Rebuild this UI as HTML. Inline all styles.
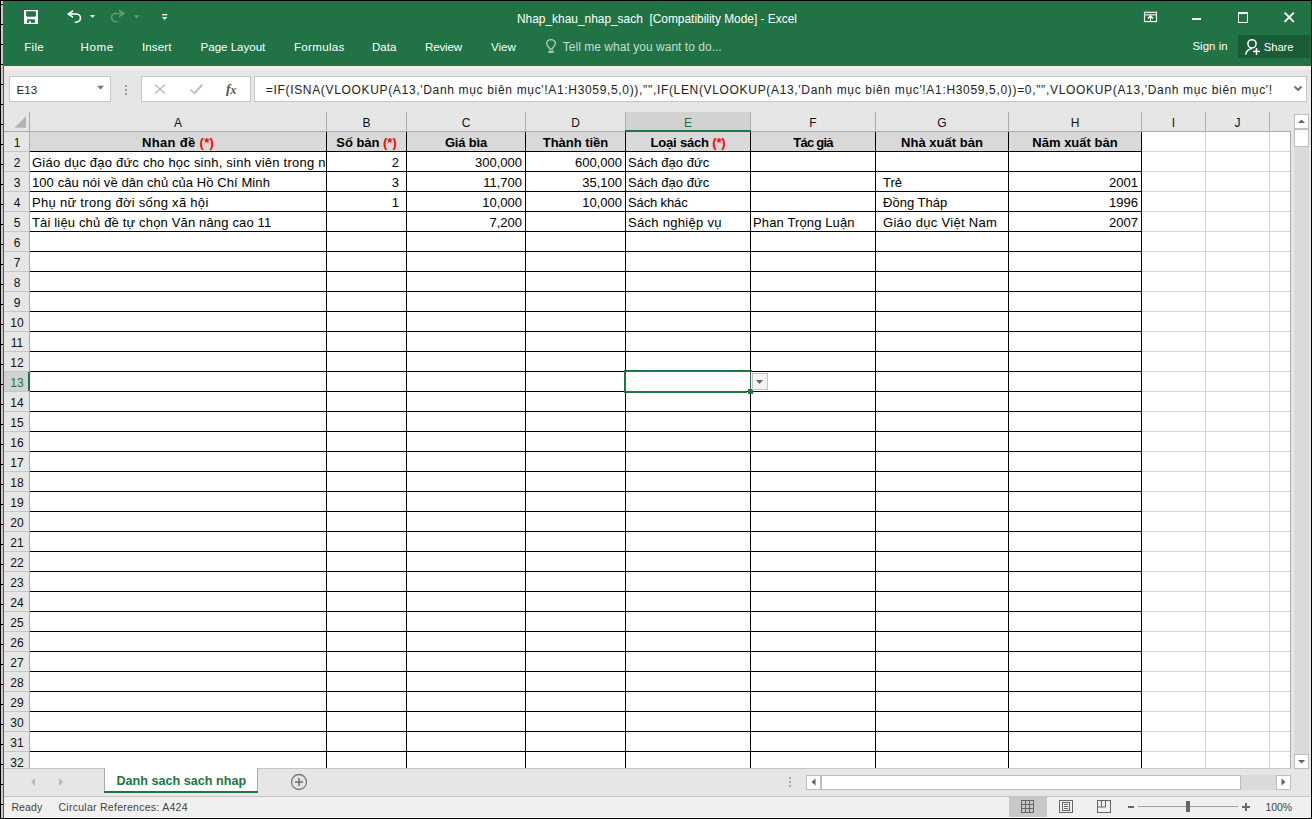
<!DOCTYPE html>
<html><head><meta charset="utf-8"><title>Nhap_khau_nhap_sach - Excel</title><style>
*{margin:0;padding:0;box-sizing:border-box}
html,body{width:1312px;height:819px;overflow:hidden;background:#000}
body{position:relative;font-family:"Liberation Sans", sans-serif;color:#000}
.a{position:absolute}
.t{position:absolute;white-space:pre;line-height:1}
</style></head>
<body>
<div class="a" style="left:1px;top:1px;width:2px;height:817px;background:#c9c9c9"></div><div class="a" style="left:1px;top:4px;width:2px;height:1px;background:#000"></div><div class="a" style="left:1px;top:24px;width:2px;height:1px;background:#000"></div><div class="a" style="left:1px;top:44px;width:2px;height:1px;background:#000"></div><div class="a" style="left:1px;top:64px;width:2px;height:1px;background:#000"></div><div class="a" style="left:1px;top:84px;width:2px;height:1px;background:#000"></div><div class="a" style="left:1px;top:104px;width:2px;height:1px;background:#000"></div><div class="a" style="left:1px;top:124px;width:2px;height:1px;background:#000"></div><div class="a" style="left:1px;top:144px;width:2px;height:1px;background:#000"></div><div class="a" style="left:1px;top:164px;width:2px;height:1px;background:#000"></div><div class="a" style="left:1px;top:184px;width:2px;height:1px;background:#000"></div><div class="a" style="left:1px;top:204px;width:2px;height:1px;background:#000"></div><div class="a" style="left:1px;top:224px;width:2px;height:1px;background:#000"></div><div class="a" style="left:1px;top:244px;width:2px;height:1px;background:#000"></div><div class="a" style="left:1px;top:264px;width:2px;height:1px;background:#000"></div><div class="a" style="left:1px;top:284px;width:2px;height:1px;background:#000"></div><div class="a" style="left:1px;top:304px;width:2px;height:1px;background:#000"></div><div class="a" style="left:1px;top:324px;width:2px;height:1px;background:#000"></div><div class="a" style="left:1px;top:344px;width:2px;height:1px;background:#000"></div><div class="a" style="left:1px;top:364px;width:2px;height:1px;background:#000"></div><div class="a" style="left:1px;top:384px;width:2px;height:1px;background:#000"></div><div class="a" style="left:1px;top:404px;width:2px;height:1px;background:#000"></div><div class="a" style="left:1px;top:424px;width:2px;height:1px;background:#000"></div><div class="a" style="left:1px;top:444px;width:2px;height:1px;background:#000"></div><div class="a" style="left:1px;top:464px;width:2px;height:1px;background:#000"></div><div class="a" style="left:1px;top:484px;width:2px;height:1px;background:#000"></div><div class="a" style="left:1px;top:504px;width:2px;height:1px;background:#000"></div><div class="a" style="left:1px;top:524px;width:2px;height:1px;background:#000"></div><div class="a" style="left:1px;top:544px;width:2px;height:1px;background:#000"></div><div class="a" style="left:1px;top:564px;width:2px;height:1px;background:#000"></div><div class="a" style="left:1px;top:584px;width:2px;height:1px;background:#000"></div><div class="a" style="left:1px;top:604px;width:2px;height:1px;background:#000"></div><div class="a" style="left:1px;top:624px;width:2px;height:1px;background:#000"></div><div class="a" style="left:1px;top:644px;width:2px;height:1px;background:#000"></div><div class="a" style="left:1px;top:664px;width:2px;height:1px;background:#000"></div><div class="a" style="left:1px;top:684px;width:2px;height:1px;background:#000"></div><div class="a" style="left:1px;top:704px;width:2px;height:1px;background:#000"></div><div class="a" style="left:1px;top:724px;width:2px;height:1px;background:#000"></div><div class="a" style="left:1px;top:744px;width:2px;height:1px;background:#000"></div><div class="a" style="left:1px;top:764px;width:2px;height:1px;background:#000"></div><div class="a" style="left:1px;top:784px;width:2px;height:1px;background:#000"></div><div class="a" style="left:1px;top:804px;width:2px;height:1px;background:#000"></div><div class="a" style="left:3px;top:1px;width:1308px;height:65px;background:#217346"></div><div class="a" style="left:3px;top:66px;width:1px;height:752px;background:#217346"></div><div class="a" style="left:4px;top:66px;width:1307px;height:4px;background:#efefef"></div><div class="a" style="left:4px;top:70px;width:1307px;height:42px;background:#e6e6e6"></div><div class="a" style="left:9px;top:76px;width:102px;height:26px;background:#fff;border:1px solid #c6c6c6"></div><div class="a" style="left:141px;top:76px;width:110px;height:26px;background:#fff;border:1px solid #c6c6c6"></div><div class="a" style="left:254px;top:76px;width:1053px;height:26px;background:#fff;border:1px solid #c6c6c6"></div><div class="a" style="left:125px;top:85px;width:2px;height:2px;background:#9a9a9a"></div><div class="a" style="left:125px;top:89px;width:2px;height:2px;background:#9a9a9a"></div><div class="a" style="left:125px;top:93px;width:2px;height:2px;background:#9a9a9a"></div><div class="a" style="left:4px;top:112px;width:1287px;height:20px;background:#e6e6e6"></div><div class="a" style="left:4px;top:132px;width:25px;height:636px;background:#e6e6e6"></div><div class="a" style="left:30px;top:132px;width:1260px;height:636px;background:#fff"></div><div class="a" style="left:30px;top:132px;width:1111px;height:19px;background:#d9d9d9"></div><div class="a" style="left:626px;top:112px;width:124px;height:18px;background:#d2d2d2"></div><div class="a" style="left:326px;top:112px;width:1px;height:19px;background:#ababab"></div><div class="a" style="left:406px;top:112px;width:1px;height:19px;background:#ababab"></div><div class="a" style="left:525px;top:112px;width:1px;height:19px;background:#ababab"></div><div class="a" style="left:625px;top:112px;width:1px;height:19px;background:#ababab"></div><div class="a" style="left:750px;top:112px;width:1px;height:19px;background:#ababab"></div><div class="a" style="left:875px;top:112px;width:1px;height:19px;background:#ababab"></div><div class="a" style="left:1008px;top:112px;width:1px;height:19px;background:#ababab"></div><div class="a" style="left:1141px;top:112px;width:1px;height:19px;background:#ababab"></div><div class="a" style="left:1205px;top:112px;width:1px;height:19px;background:#ababab"></div><div class="a" style="left:1269px;top:112px;width:1px;height:19px;background:#ababab"></div><div class="a" style="left:29px;top:112px;width:1px;height:656px;background:#ababab"></div><div class="a" style="left:4px;top:131px;width:1286px;height:1px;background:#ababab"></div><div class="a" style="left:625px;top:130px;width:126px;height:2px;background:#217346"></div><div class="a" style="left:1205px;top:132px;width:1px;height:636px;background:#d4d4d4"></div><div class="a" style="left:1269px;top:132px;width:1px;height:636px;background:#d4d4d4"></div><div class="a" style="left:1142px;top:151px;width:148px;height:1px;background:#d4d4d4"></div><div class="a" style="left:4px;top:151px;width:25px;height:1px;background:#c6c6c6"></div><div class="a" style="left:1142px;top:171px;width:148px;height:1px;background:#d4d4d4"></div><div class="a" style="left:4px;top:171px;width:25px;height:1px;background:#c6c6c6"></div><div class="a" style="left:1142px;top:191px;width:148px;height:1px;background:#d4d4d4"></div><div class="a" style="left:4px;top:191px;width:25px;height:1px;background:#c6c6c6"></div><div class="a" style="left:1142px;top:211px;width:148px;height:1px;background:#d4d4d4"></div><div class="a" style="left:4px;top:211px;width:25px;height:1px;background:#c6c6c6"></div><div class="a" style="left:1142px;top:231px;width:148px;height:1px;background:#d4d4d4"></div><div class="a" style="left:4px;top:231px;width:25px;height:1px;background:#c6c6c6"></div><div class="a" style="left:1142px;top:251px;width:148px;height:1px;background:#d4d4d4"></div><div class="a" style="left:4px;top:251px;width:25px;height:1px;background:#c6c6c6"></div><div class="a" style="left:1142px;top:271px;width:148px;height:1px;background:#d4d4d4"></div><div class="a" style="left:4px;top:271px;width:25px;height:1px;background:#c6c6c6"></div><div class="a" style="left:1142px;top:291px;width:148px;height:1px;background:#d4d4d4"></div><div class="a" style="left:4px;top:291px;width:25px;height:1px;background:#c6c6c6"></div><div class="a" style="left:1142px;top:311px;width:148px;height:1px;background:#d4d4d4"></div><div class="a" style="left:4px;top:311px;width:25px;height:1px;background:#c6c6c6"></div><div class="a" style="left:1142px;top:331px;width:148px;height:1px;background:#d4d4d4"></div><div class="a" style="left:4px;top:331px;width:25px;height:1px;background:#c6c6c6"></div><div class="a" style="left:1142px;top:351px;width:148px;height:1px;background:#d4d4d4"></div><div class="a" style="left:4px;top:351px;width:25px;height:1px;background:#c6c6c6"></div><div class="a" style="left:1142px;top:371px;width:148px;height:1px;background:#d4d4d4"></div><div class="a" style="left:4px;top:371px;width:25px;height:1px;background:#c6c6c6"></div><div class="a" style="left:1142px;top:391px;width:148px;height:1px;background:#d4d4d4"></div><div class="a" style="left:4px;top:391px;width:25px;height:1px;background:#c6c6c6"></div><div class="a" style="left:1142px;top:411px;width:148px;height:1px;background:#d4d4d4"></div><div class="a" style="left:4px;top:411px;width:25px;height:1px;background:#c6c6c6"></div><div class="a" style="left:1142px;top:431px;width:148px;height:1px;background:#d4d4d4"></div><div class="a" style="left:4px;top:431px;width:25px;height:1px;background:#c6c6c6"></div><div class="a" style="left:1142px;top:451px;width:148px;height:1px;background:#d4d4d4"></div><div class="a" style="left:4px;top:451px;width:25px;height:1px;background:#c6c6c6"></div><div class="a" style="left:1142px;top:471px;width:148px;height:1px;background:#d4d4d4"></div><div class="a" style="left:4px;top:471px;width:25px;height:1px;background:#c6c6c6"></div><div class="a" style="left:1142px;top:491px;width:148px;height:1px;background:#d4d4d4"></div><div class="a" style="left:4px;top:491px;width:25px;height:1px;background:#c6c6c6"></div><div class="a" style="left:1142px;top:511px;width:148px;height:1px;background:#d4d4d4"></div><div class="a" style="left:4px;top:511px;width:25px;height:1px;background:#c6c6c6"></div><div class="a" style="left:1142px;top:531px;width:148px;height:1px;background:#d4d4d4"></div><div class="a" style="left:4px;top:531px;width:25px;height:1px;background:#c6c6c6"></div><div class="a" style="left:1142px;top:551px;width:148px;height:1px;background:#d4d4d4"></div><div class="a" style="left:4px;top:551px;width:25px;height:1px;background:#c6c6c6"></div><div class="a" style="left:1142px;top:571px;width:148px;height:1px;background:#d4d4d4"></div><div class="a" style="left:4px;top:571px;width:25px;height:1px;background:#c6c6c6"></div><div class="a" style="left:1142px;top:591px;width:148px;height:1px;background:#d4d4d4"></div><div class="a" style="left:4px;top:591px;width:25px;height:1px;background:#c6c6c6"></div><div class="a" style="left:1142px;top:611px;width:148px;height:1px;background:#d4d4d4"></div><div class="a" style="left:4px;top:611px;width:25px;height:1px;background:#c6c6c6"></div><div class="a" style="left:1142px;top:631px;width:148px;height:1px;background:#d4d4d4"></div><div class="a" style="left:4px;top:631px;width:25px;height:1px;background:#c6c6c6"></div><div class="a" style="left:1142px;top:651px;width:148px;height:1px;background:#d4d4d4"></div><div class="a" style="left:4px;top:651px;width:25px;height:1px;background:#c6c6c6"></div><div class="a" style="left:1142px;top:671px;width:148px;height:1px;background:#d4d4d4"></div><div class="a" style="left:4px;top:671px;width:25px;height:1px;background:#c6c6c6"></div><div class="a" style="left:1142px;top:691px;width:148px;height:1px;background:#d4d4d4"></div><div class="a" style="left:4px;top:691px;width:25px;height:1px;background:#c6c6c6"></div><div class="a" style="left:1142px;top:711px;width:148px;height:1px;background:#d4d4d4"></div><div class="a" style="left:4px;top:711px;width:25px;height:1px;background:#c6c6c6"></div><div class="a" style="left:1142px;top:731px;width:148px;height:1px;background:#d4d4d4"></div><div class="a" style="left:4px;top:731px;width:25px;height:1px;background:#c6c6c6"></div><div class="a" style="left:1142px;top:751px;width:148px;height:1px;background:#d4d4d4"></div><div class="a" style="left:4px;top:751px;width:25px;height:1px;background:#c6c6c6"></div><div class="a" style="left:326px;top:132px;width:1px;height:636px;background:#000"></div><div class="a" style="left:406px;top:132px;width:1px;height:636px;background:#000"></div><div class="a" style="left:525px;top:132px;width:1px;height:636px;background:#000"></div><div class="a" style="left:625px;top:132px;width:1px;height:636px;background:#000"></div><div class="a" style="left:750px;top:132px;width:1px;height:636px;background:#000"></div><div class="a" style="left:875px;top:132px;width:1px;height:636px;background:#000"></div><div class="a" style="left:1008px;top:132px;width:1px;height:636px;background:#000"></div><div class="a" style="left:1141px;top:132px;width:1px;height:636px;background:#000"></div><div class="a" style="left:30px;top:151px;width:1112px;height:1px;background:#000"></div><div class="a" style="left:30px;top:171px;width:1112px;height:1px;background:#000"></div><div class="a" style="left:30px;top:191px;width:1112px;height:1px;background:#000"></div><div class="a" style="left:30px;top:211px;width:1112px;height:1px;background:#000"></div><div class="a" style="left:30px;top:231px;width:1112px;height:1px;background:#000"></div><div class="a" style="left:30px;top:251px;width:1112px;height:1px;background:#000"></div><div class="a" style="left:30px;top:271px;width:1112px;height:1px;background:#000"></div><div class="a" style="left:30px;top:291px;width:1112px;height:1px;background:#000"></div><div class="a" style="left:30px;top:311px;width:1112px;height:1px;background:#000"></div><div class="a" style="left:30px;top:331px;width:1112px;height:1px;background:#000"></div><div class="a" style="left:30px;top:351px;width:1112px;height:1px;background:#000"></div><div class="a" style="left:30px;top:371px;width:1112px;height:1px;background:#000"></div><div class="a" style="left:30px;top:391px;width:1112px;height:1px;background:#000"></div><div class="a" style="left:30px;top:411px;width:1112px;height:1px;background:#000"></div><div class="a" style="left:30px;top:431px;width:1112px;height:1px;background:#000"></div><div class="a" style="left:30px;top:451px;width:1112px;height:1px;background:#000"></div><div class="a" style="left:30px;top:471px;width:1112px;height:1px;background:#000"></div><div class="a" style="left:30px;top:491px;width:1112px;height:1px;background:#000"></div><div class="a" style="left:30px;top:511px;width:1112px;height:1px;background:#000"></div><div class="a" style="left:30px;top:531px;width:1112px;height:1px;background:#000"></div><div class="a" style="left:30px;top:551px;width:1112px;height:1px;background:#000"></div><div class="a" style="left:30px;top:571px;width:1112px;height:1px;background:#000"></div><div class="a" style="left:30px;top:591px;width:1112px;height:1px;background:#000"></div><div class="a" style="left:30px;top:611px;width:1112px;height:1px;background:#000"></div><div class="a" style="left:30px;top:631px;width:1112px;height:1px;background:#000"></div><div class="a" style="left:30px;top:651px;width:1112px;height:1px;background:#000"></div><div class="a" style="left:30px;top:671px;width:1112px;height:1px;background:#000"></div><div class="a" style="left:30px;top:691px;width:1112px;height:1px;background:#000"></div><div class="a" style="left:30px;top:711px;width:1112px;height:1px;background:#000"></div><div class="a" style="left:30px;top:731px;width:1112px;height:1px;background:#000"></div><div class="a" style="left:30px;top:751px;width:1112px;height:1px;background:#000"></div><div class="a" style="left:1290px;top:131px;width:1px;height:638px;background:#ababab"></div><div class="a" style="left:4px;top:768px;width:1307px;height:1px;background:#c6c6c6"></div><svg class="a" style="left:4px;top:112px;" width="25" height="19" viewBox="0 0 25 19"><polygon points="10.5,15.7 22,15.7 22,4.2" fill="#b4b4b4"/></svg><div class="a" style="left:4px;top:372px;width:24px;height:19px;background:#d2d2d2"></div><div class="a" style="left:28px;top:372px;width:2px;height:19px;background:#217346"></div><div class="a" style="left:624px;top:370px;width:128px;height:2px;background:#217346"></div><div class="a" style="left:624px;top:370px;width:2px;height:23px;background:#217346"></div><div class="a" style="left:750px;top:370px;width:1px;height:19px;background:#217346"></div><div class="a" style="left:624px;top:391px;width:123px;height:2px;background:#217346"></div><div class="a" style="left:748px;top:389px;width:5px;height:5px;background:#217346"></div><div class="a" style="left:752px;top:373px;width:16px;height:17px;background:#f4f4f6;border:1px solid #c2c2c4"></div><svg class="a" style="left:752px;top:373px;" width="16" height="17" viewBox="0 0 16 17"><polygon points="4,7 11,7 7.5,11" fill="#666"/></svg><div class="a" style="left:1291px;top:112px;width:20px;height:657px;background:#e6e6e6"></div><div class="a" style="left:1294px;top:147px;width:15px;height:607px;background:#dadada"></div><div class="a" style="left:1294px;top:114px;width:15px;height:15px;background:#fff;border:1px solid #bdbdbd"></div><svg class="a" style="left:1294px;top:114px;" width="15" height="15" viewBox="0 0 15 15"><polygon points="4,9 11,9 7.5,5.5" fill="#606060"/></svg><div class="a" style="left:1294px;top:129px;width:15px;height:18px;background:#fff;border:1px solid #bdbdbd"></div><div class="a" style="left:1294px;top:754px;width:15px;height:15px;background:#fff;border:1px solid #bdbdbd"></div><svg class="a" style="left:1294px;top:754px;" width="15" height="15" viewBox="0 0 15 15"><polygon points="4,6 11,6 7.5,9.5" fill="#606060"/></svg><div class="a" style="left:4px;top:769px;width:1307px;height:27px;background:#e6e6e6"></div><div class="a" style="left:4px;top:796px;width:1307px;height:1px;background:#c6c6c6"></div><div class="a" style="left:104px;top:768px;width:154px;height:23px;background:#fff;border-left:1px solid #ababab;border-right:1px solid #ababab"></div><div class="a" style="left:104px;top:791px;width:154px;height:2px;background:#217346"></div><svg class="a" style="left:29px;top:775px;" width="8" height="14" viewBox="0 0 8 14"><polygon points="6,3 6,11 2,7" fill="#b9b9b9"/></svg><svg class="a" style="left:57px;top:775px;" width="8" height="14" viewBox="0 0 8 14"><polygon points="2,3 2,11 6,7" fill="#b9b9b9"/></svg><svg class="a" style="left:289px;top:772px;" width="20" height="20" viewBox="0 0 20 20"><circle cx="10" cy="10" r="7.5" fill="none" stroke="#7a7a7a" stroke-width="1.3"/><rect x="6" y="9.2" width="8" height="1.7" fill="#7a7a7a"/><rect x="9.15" y="6" width="1.7" height="8" fill="#7a7a7a"/></svg><div class="a" style="left:789px;top:777px;width:2px;height:2px;background:#a8a8a8"></div><div class="a" style="left:789px;top:781px;width:2px;height:2px;background:#a8a8a8"></div><div class="a" style="left:789px;top:785px;width:2px;height:2px;background:#a8a8a8"></div><div class="a" style="left:806px;top:775px;width:485px;height:15px;background:#dadada"></div><div class="a" style="left:806px;top:775px;width:15px;height:15px;background:#fff;border:1px solid #bdbdbd"></div><svg class="a" style="left:806px;top:775px;" width="15" height="15" viewBox="0 0 15 15"><polygon points="9.5,3.5 9.5,10.5 5.5,7" fill="#606060"/></svg><div class="a" style="left:821px;top:775px;width:420px;height:15px;background:#fff;border:1px solid #bdbdbd"></div><div class="a" style="left:1276px;top:775px;width:15px;height:15px;background:#fff;border:1px solid #bdbdbd"></div><svg class="a" style="left:1276px;top:775px;" width="15" height="15" viewBox="0 0 15 15"><polygon points="5.5,3.5 5.5,10.5 9.5,7" fill="#606060"/></svg><div class="a" style="left:4px;top:797px;width:1307px;height:21px;background:#f0f0f0"></div><div class="a" style="left:4px;top:817px;width:1307px;height:1px;background:#fafafa"></div><div class="a" style="left:1009px;top:797px;width:38px;height:20px;background:#c8c8c8"></div><svg class="a" style="left:1021px;top:800px;" width="14" height="14" viewBox="0 0 14 14"><g fill="none" stroke="#666" stroke-width="1"><rect x="0.5" y="0.5" width="12" height="12"/><line x1="4.5" y1="0" x2="4.5" y2="13"/><line x1="8.5" y1="0" x2="8.5" y2="13"/><line x1="0" y1="4.5" x2="13" y2="4.5"/><line x1="0" y1="8.5" x2="13" y2="8.5"/></g></svg><svg class="a" style="left:1059px;top:800px;" width="15" height="14" viewBox="0 0 15 14"><g fill="none" stroke="#666" stroke-width="1"><rect x="0.5" y="0.5" width="13" height="12"/><rect x="3.5" y="2.5" width="7" height="8"/><line x1="5" y1="4.5" x2="9" y2="4.5"/><line x1="5" y1="6.5" x2="9" y2="6.5"/><line x1="5" y1="8.5" x2="9" y2="8.5"/></g></svg><svg class="a" style="left:1097px;top:800px;" width="15" height="14" viewBox="0 0 15 14"><g fill="none" stroke="#666" stroke-width="1"><rect x="0.5" y="0.5" width="13" height="12"/><polyline points="0.5,7 8.5,7 8.5,0.5"/><line x1="4.5" y1="0.5" x2="4.5" y2="7"/></g></svg><div class="a" style="left:1128px;top:806px;width:6px;height:2px;background:#666"></div><div class="a" style="left:1138px;top:806px;width:100px;height:1px;background:#a0a0a0"></div><div class="a" style="left:1186px;top:801px;width:4px;height:11px;background:#666"></div><div class="a" style="left:1242px;top:806px;width:8px;height:2px;background:#666"></div><div class="a" style="left:1245px;top:803px;width:2px;height:8px;background:#666"></div><svg class="a" style="left:24px;top:10px;" width="14" height="14" viewBox="0 0 14 14"><rect x="0" y="0" width="14" height="14" fill="#ffffff"/><path d="M2.1,1.2 H11.9 V5.8 L11,6.7 H3 L2.1,5.8 Z" fill="#217346"/><rect x="3.1" y="9.3" width="7.8" height="3.6" fill="#217346"/><rect x="5" y="11.3" width="2" height="1.7" fill="#ffffff"/></svg><svg class="a" style="left:64px;top:8px;" width="20" height="18" viewBox="0 0 20 18"><path d="M5,6 H12 A4.5,4.1 0 0 1 12,14.2 H11.4" fill="none" stroke="#ffffff" stroke-width="1.6" stroke-linecap="round"/><polygon points="2.8,6 8.8,2 9.3,3.5 6,6 9.3,8.5 8.8,10" fill="#ffffff"/></svg><svg class="a" style="left:88px;top:13px;" width="9" height="7" viewBox="0 0 9 7"><polygon points="1.8,2 7.2,2 4.5,4.8" fill="#ffffff"/></svg><svg class="a" style="left:108px;top:8px;" width="20" height="18" viewBox="0 0 20 18"><path d="M15,5.5 H8 A4.5,4.1 0 0 0 8,13.7 H8.6" fill="none" stroke="#5e9f78" stroke-width="1.6" stroke-linecap="round"/><polygon points="17.2,5.5 11.2,1.5 10.7,3 14,5.5 10.7,8 11.2,9.5" fill="#5e9f78"/></svg><svg class="a" style="left:131px;top:13px;" width="11" height="7" viewBox="0 0 11 7"><polygon points="2.6,2.2 8.6,2.2 5.6,5.3" fill="#5e9f78"/></svg><svg class="a" style="left:160px;top:12px;" width="9" height="10" viewBox="0 0 9 10"><rect x="2" y="2" width="5.3" height="1.3" fill="#ffffff"/><polygon points="2,5 7.3,5 4.65,8" fill="#ffffff"/></svg><svg class="a" style="left:1143px;top:11px;" width="16" height="13" viewBox="0 0 16 13"><g fill="none" stroke="#ffffff" stroke-width="1.1"><rect x="1.5" y="1.3" width="12" height="9.3"/><line x1="1.5" y1="3.8" x2="13.5" y2="3.8"/><line x1="7.5" y1="4.5" x2="7.5" y2="10.5"/><polyline points="5,7.5 7.5,5 10,7.5" stroke-width="1.4"/></g></svg><div class="a" style="left:1192px;top:18px;width:9px;height:2px;background:#fff"></div><svg class="a" style="left:1237px;top:11px;" width="13" height="13" viewBox="0 0 13 13"><g fill="none" stroke="#ffffff" stroke-width="1"><rect x="1.5" y="1.5" width="9" height="10"/><line x1="1" y1="2.5" x2="11" y2="2.5"/></g></svg><svg class="a" style="left:1282px;top:10px;" width="14" height="14" viewBox="0 0 14 14"><g stroke="#ffffff" stroke-width="1.9"><line x1="2.6" y1="2.6" x2="11.8" y2="11.8"/><line x1="11.8" y1="2.6" x2="2.6" y2="11.8"/></g></svg><svg class="a" style="left:543px;top:36px;" width="16" height="20" viewBox="0 0 16 20"><path d="M6.6,13 C6.3,10.8 3.6,9.6 3.6,7.6 A4.4,4 0 1 1 12.4,7.6 C12.4,9.6 9.7,10.8 9.4,13 Z" fill="none" stroke="#a9d0b5" stroke-width="1.3"/><rect x="5.4" y="14.7" width="5.4" height="2.2" fill="#a9d0b5"/></svg><div class="a" style="left:1238px;top:35px;width:72px;height:23px;background:#1a5c35"></div><svg class="a" style="left:1242px;top:37px;" width="22" height="20" viewBox="0 0 22 20"><g fill="none" stroke="#ffffff" stroke-width="1.5"><circle cx="10" cy="6.8" r="4.1"/><path d="M3.6,17.5 C4.5,13.5 7,11.8 10,11.4"/><line x1="11" y1="14.4" x2="18" y2="14.4"/><line x1="14.5" y1="11" x2="14.5" y2="18"/></g></svg><svg class="a" style="left:150px;top:80px;" width="20" height="18" viewBox="0 0 20 18"><g stroke="#b8b8b8" stroke-width="1.3"><line x1="5" y1="4.5" x2="15" y2="13.5"/><line x1="15" y1="4.5" x2="5" y2="13.5"/></g></svg><svg class="a" style="left:186px;top:80px;" width="20" height="18" viewBox="0 0 20 18"><polyline points="4.5,9.8 8.6,13.2 16.3,4.5" fill="none" stroke="#c2c2c2" stroke-width="2"/></svg><div class="t" style="left:226px;top:82.3px;font-family:'Liberation Serif',serif;font-style:italic;font-weight:bold;font-size:13.5px;color:#555">f</div><div class="t" style="left:230.5px;top:84.5px;font-family:'Liberation Serif',serif;font-style:italic;font-weight:bold;font-size:11.5px;color:#555">x</div><svg class="a" style="left:95px;top:84px;" width="11" height="8" viewBox="0 0 11 8"><polygon points="2,1.8 9,1.8 5.5,5.8" fill="#7a7a7a"/></svg><svg class="a" style="left:1292px;top:84px;" width="12" height="10" viewBox="0 0 12 10"><polyline points="2.5,2.5 6,6 9.5,2.5" fill="none" stroke="#6a6a6a" stroke-width="1.8"/></svg><div id="t1" class="t" style="left:517px;top:14.43px;font-size:11.9px;letter-spacing:0.008px;color:#fff">Nhap_khau_nhap_sach  [Compatibility Mode] - Excel</div><div id="t2" class="t" style="left:24.2px;top:41.18px;font-size:11.6px;letter-spacing:0.267px;color:#fff">File</div><div id="t3" class="t" style="left:80.6px;top:41.18px;font-size:11.6px;letter-spacing:0.533px;color:#fff">Home</div><div id="t4" class="t" style="left:142px;top:41.18px;font-size:11.6px;letter-spacing:0.080px;color:#fff">Insert</div><div id="t5" class="t" style="left:200.6px;top:41.18px;font-size:11.6px;letter-spacing:-0.040px;color:#fff">Page Layout</div><div id="t6" class="t" style="left:294px;top:41.18px;font-size:11.6px;letter-spacing:0.286px;color:#fff">Formulas</div><div id="t7" class="t" style="left:372px;top:41.18px;font-size:11.6px;color:#fff">Data</div><div id="t8" class="t" style="left:425px;top:41.18px;font-size:11.6px;letter-spacing:-0.200px;color:#fff">Review</div><div id="t9" class="t" style="left:491px;top:41.18px;font-size:11.6px;color:#fff">View</div><div id="t10" class="t" style="left:562.8px;top:40.84px;font-size:12px;letter-spacing:0.028px;color:#c7dccd">Tell me what you want to do...</div><div id="t11" class="t" style="left:1192.4px;top:41.35px;font-size:11.4px;letter-spacing:0.067px;color:#fff">Sign in</div><div id="t12" class="t" style="left:1263.8px;top:41.52px;font-size:11.2px;letter-spacing:-0.050px;color:#fff">Share</div><div id="t13" class="t" style="left:16.4px;top:84.77px;font-size:11.5px;letter-spacing:0.100px;color:#222">E13</div><div id="t14" class="t" style="left:265.8px;top:83.64px;font-size:12px;letter-spacing:0.670px;color:#222">=IF(ISNA(VLOOKUP(A13,&#x27;Danh mục biên mục&#x27;!A1:H3059,5,0)),&quot;&quot;,IF(LEN(VLOOKUP(A13,&#x27;Danh mục biên mục&#x27;!A1:H3059,5,0))=0,&quot;&quot;,VLOOKUP(A13,&#x27;Danh mục biên mục&#x27;!</div><div id="t15" class="t" style="left:30px;width:296px;text-align:center;top:116.64px;font-size:12px;color:#111">A</div><div id="t16" class="t" style="left:327px;width:79px;text-align:center;top:116.64px;font-size:12px;color:#111">B</div><div id="t17" class="t" style="left:407px;width:118px;text-align:center;top:116.64px;font-size:12px;color:#111">C</div><div id="t18" class="t" style="left:526px;width:99px;text-align:center;top:116.64px;font-size:12px;color:#111">D</div><div id="t19" class="t" style="left:626px;width:124px;text-align:center;top:116.64px;font-size:12px;color:#217346">E</div><div id="t20" class="t" style="left:751px;width:124px;text-align:center;top:116.64px;font-size:12px;color:#111">F</div><div id="t21" class="t" style="left:876px;width:132px;text-align:center;top:116.64px;font-size:12px;color:#111">G</div><div id="t22" class="t" style="left:1009px;width:132px;text-align:center;top:116.64px;font-size:12px;color:#111">H</div><div id="t23" class="t" style="left:1142px;width:63px;text-align:center;top:116.64px;font-size:12px;color:#111">I</div><div id="t24" class="t" style="left:1206px;width:63px;text-align:center;top:116.64px;font-size:12px;color:#111">J</div><div id="t25" class="t" style="left:5px;width:24px;text-align:center;top:136.54px;font-size:12px;color:#111">1</div><div id="t26" class="t" style="left:5px;width:24px;text-align:center;top:156.54px;font-size:12px;color:#111">2</div><div id="t27" class="t" style="left:5px;width:24px;text-align:center;top:176.54px;font-size:12px;color:#111">3</div><div id="t28" class="t" style="left:5px;width:24px;text-align:center;top:196.54px;font-size:12px;color:#111">4</div><div id="t29" class="t" style="left:5px;width:24px;text-align:center;top:216.54px;font-size:12px;color:#111">5</div><div id="t30" class="t" style="left:5px;width:24px;text-align:center;top:236.54px;font-size:12px;color:#111">6</div><div id="t31" class="t" style="left:5px;width:24px;text-align:center;top:256.54px;font-size:12px;color:#111">7</div><div id="t32" class="t" style="left:5px;width:24px;text-align:center;top:276.54px;font-size:12px;color:#111">8</div><div id="t33" class="t" style="left:5px;width:24px;text-align:center;top:296.54px;font-size:12px;color:#111">9</div><div id="t34" class="t" style="left:5px;width:24px;text-align:center;top:316.54px;font-size:12px;color:#111">10</div><div id="t35" class="t" style="left:5px;width:24px;text-align:center;top:336.54px;font-size:12px;color:#111">11</div><div id="t36" class="t" style="left:5px;width:24px;text-align:center;top:356.54px;font-size:12px;color:#111">12</div><div id="t37" class="t" style="left:5px;width:24px;text-align:center;top:376.54px;font-size:12px;color:#217346">13</div><div id="t38" class="t" style="left:5px;width:24px;text-align:center;top:396.54px;font-size:12px;color:#111">14</div><div id="t39" class="t" style="left:5px;width:24px;text-align:center;top:416.54px;font-size:12px;color:#111">15</div><div id="t40" class="t" style="left:5px;width:24px;text-align:center;top:436.54px;font-size:12px;color:#111">16</div><div id="t41" class="t" style="left:5px;width:24px;text-align:center;top:456.54px;font-size:12px;color:#111">17</div><div id="t42" class="t" style="left:5px;width:24px;text-align:center;top:476.54px;font-size:12px;color:#111">18</div><div id="t43" class="t" style="left:5px;width:24px;text-align:center;top:496.54px;font-size:12px;color:#111">19</div><div id="t44" class="t" style="left:5px;width:24px;text-align:center;top:516.54px;font-size:12px;color:#111">20</div><div id="t45" class="t" style="left:5px;width:24px;text-align:center;top:536.54px;font-size:12px;color:#111">21</div><div id="t46" class="t" style="left:5px;width:24px;text-align:center;top:556.54px;font-size:12px;color:#111">22</div><div id="t47" class="t" style="left:5px;width:24px;text-align:center;top:576.54px;font-size:12px;color:#111">23</div><div id="t48" class="t" style="left:5px;width:24px;text-align:center;top:596.54px;font-size:12px;color:#111">24</div><div id="t49" class="t" style="left:5px;width:24px;text-align:center;top:616.54px;font-size:12px;color:#111">25</div><div id="t50" class="t" style="left:5px;width:24px;text-align:center;top:636.54px;font-size:12px;color:#111">26</div><div id="t51" class="t" style="left:5px;width:24px;text-align:center;top:656.54px;font-size:12px;color:#111">27</div><div id="t52" class="t" style="left:5px;width:24px;text-align:center;top:676.54px;font-size:12px;color:#111">28</div><div id="t53" class="t" style="left:5px;width:24px;text-align:center;top:696.54px;font-size:12px;color:#111">29</div><div id="t54" class="t" style="left:5px;width:24px;text-align:center;top:716.54px;font-size:12px;color:#111">30</div><div id="t55" class="t" style="left:5px;width:24px;text-align:center;top:736.54px;font-size:12px;color:#111">31</div><div id="t56" class="t" style="left:5px;width:24px;text-align:center;top:756.54px;font-size:12px;color:#111">32</div><div id="t57" class="t" style="left:30px;width:296px;text-align:center;top:135.50px;font-size:13px;letter-spacing:0.320px;font-weight:bold"><span style="margin-right:-0.320px">Nhan đề <span style="color:#ff0000">(*)</span></span></div><div id="t58" class="t" style="left:327px;width:79px;text-align:center;top:135.50px;font-size:13px;letter-spacing:-0.022px;font-weight:bold"><span style="margin-right:--0.022px">Số bản <span style="color:#ff0000">(*)</span></span></div><div id="t59" class="t" style="left:407px;width:118px;text-align:center;top:135.50px;font-size:13px;letter-spacing:-0.167px;font-weight:bold"><span style="margin-right:--0.167px">Giá bìa</span></div><div id="t60" class="t" style="left:526px;width:99px;text-align:center;top:135.50px;font-size:13px;letter-spacing:-0.022px;font-weight:bold"><span style="margin-right:--0.022px">Thành tiền</span></div><div id="t61" class="t" style="left:626px;width:124px;text-align:center;top:135.50px;font-size:13px;letter-spacing:-0.183px;font-weight:bold"><span style="margin-right:--0.183px">Loại sách <span style="color:#ff0000">(*)</span></span></div><div id="t62" class="t" style="left:751px;width:124px;text-align:center;top:135.50px;font-size:13px;letter-spacing:-0.767px;font-weight:bold"><span style="margin-right:--0.767px">Tác giả</span></div><div id="t63" class="t" style="left:876px;width:132px;text-align:center;top:135.50px;font-size:13px;letter-spacing:0.018px;font-weight:bold"><span style="margin-right:-0.018px">Nhà xuất bản</span></div><div id="t64" class="t" style="left:1009px;width:132px;text-align:center;top:135.50px;font-size:13px;letter-spacing:0.018px;font-weight:bold"><span style="margin-right:-0.018px">Năm xuất bản</span></div><div class="a" style="left:30px;top:152px;width:296px;height:19px;overflow:hidden"><div id="c00" class="t" style="left:2px;top:3.50px;font-size:13px;letter-spacing:0.230px;">Giáo dục đạo đức cho học sinh, sinh viên trong nhà trường</div></div><div id="t65" class="t" style="left:-301px;width:700px;text-align:right;top:155.50px;font-size:13px;">2</div><div id="t66" class="t" style="left:-178px;width:700px;text-align:right;top:155.50px;font-size:13px;">300,000</div><div id="t67" class="t" style="left:-78px;width:700px;text-align:right;top:155.50px;font-size:13px;">600,000</div><div class="a" style="left:626px;top:152px;width:124px;height:19px;overflow:hidden"><div id="c04" class="t" style="left:2px;top:3.50px;font-size:13px;letter-spacing:0.018px;">Sách đạo đức</div></div><div class="a" style="left:30px;top:172px;width:296px;height:19px;overflow:hidden"><div id="c10" class="t" style="left:2px;top:3.50px;font-size:13px;letter-spacing:0.081px;">100 câu nói về dân chủ của Hồ Chí Minh</div></div><div id="t68" class="t" style="left:-301px;width:700px;text-align:right;top:175.50px;font-size:13px;">3</div><div id="t69" class="t" style="left:-178px;width:700px;text-align:right;top:175.50px;font-size:13px;">11,700</div><div id="t70" class="t" style="left:-78px;width:700px;text-align:right;top:175.50px;font-size:13px;">35,100</div><div class="a" style="left:626px;top:172px;width:124px;height:19px;overflow:hidden"><div id="c14" class="t" style="left:2px;top:3.50px;font-size:13px;letter-spacing:0.018px;">Sách đạo đức</div></div><div class="a" style="left:876px;top:172px;width:132px;height:19px;overflow:hidden"><div id="c16" class="t" style="left:7px;top:3.50px;font-size:13px;">Trẻ</div></div><div id="t71" class="t" style="left:438px;width:700px;text-align:right;top:175.50px;font-size:13px;">2001</div><div class="a" style="left:30px;top:192px;width:296px;height:19px;overflow:hidden"><div id="c20" class="t" style="left:2px;top:3.50px;font-size:13px;letter-spacing:0.296px;">Phụ nữ trong đời sống xã hội</div></div><div id="t72" class="t" style="left:-301px;width:700px;text-align:right;top:195.50px;font-size:13px;">1</div><div id="t73" class="t" style="left:-178px;width:700px;text-align:right;top:195.50px;font-size:13px;">10,000</div><div id="t74" class="t" style="left:-78px;width:700px;text-align:right;top:195.50px;font-size:13px;">10,000</div><div class="a" style="left:626px;top:192px;width:124px;height:19px;overflow:hidden"><div id="c24" class="t" style="left:2px;top:3.50px;font-size:13px;letter-spacing:-0.125px;">Sách khác</div></div><div class="a" style="left:876px;top:192px;width:132px;height:19px;overflow:hidden"><div id="c26" class="t" style="left:7px;top:3.50px;font-size:13px;letter-spacing:0.025px;">Đồng Tháp</div></div><div id="t75" class="t" style="left:438px;width:700px;text-align:right;top:195.50px;font-size:13px;">1996</div><div class="a" style="left:30px;top:212px;width:296px;height:19px;overflow:hidden"><div id="c30" class="t" style="left:2px;top:3.50px;font-size:13px;letter-spacing:0.158px;">Tài liệu chủ đề tự chọn Văn nâng cao 11</div></div><div id="t76" class="t" style="left:-178px;width:700px;text-align:right;top:215.50px;font-size:13px;">7,200</div><div class="a" style="left:626px;top:212px;width:124px;height:19px;overflow:hidden"><div id="c34" class="t" style="left:2px;top:3.50px;font-size:13px;letter-spacing:0.292px;">Sách nghiệp vụ</div></div><div class="a" style="left:751px;top:212px;width:124px;height:19px;overflow:hidden"><div id="c35" class="t" style="left:2px;top:3.50px;font-size:13px;letter-spacing:0.129px;">Phan Trọng Luận</div></div><div class="a" style="left:876px;top:212px;width:132px;height:19px;overflow:hidden"><div id="c36" class="t" style="left:7px;top:3.50px;font-size:13px;letter-spacing:0.312px;">Giáo dục Việt Nam</div></div><div id="t77" class="t" style="left:438px;width:700px;text-align:right;top:215.50px;font-size:13px;">2007</div><div id="t78" class="t" style="left:116.5px;top:774.93px;font-size:12.6px;letter-spacing:0.011px;color:#217346;font-weight:bold">Danh sach sach nhap</div><div id="t79" class="t" style="left:11.4px;top:801.61px;font-size:10.5px;letter-spacing:0.100px;color:#444">Ready</div><div id="t80" class="t" style="left:58.5px;top:801.61px;font-size:10.5px;letter-spacing:0.267px;color:#444">Circular References: A424</div><div id="t81" class="t" style="left:1265.6px;top:801.71px;font-size:10.5px;letter-spacing:-0.133px;color:#444">100%</div>
</body></html>
